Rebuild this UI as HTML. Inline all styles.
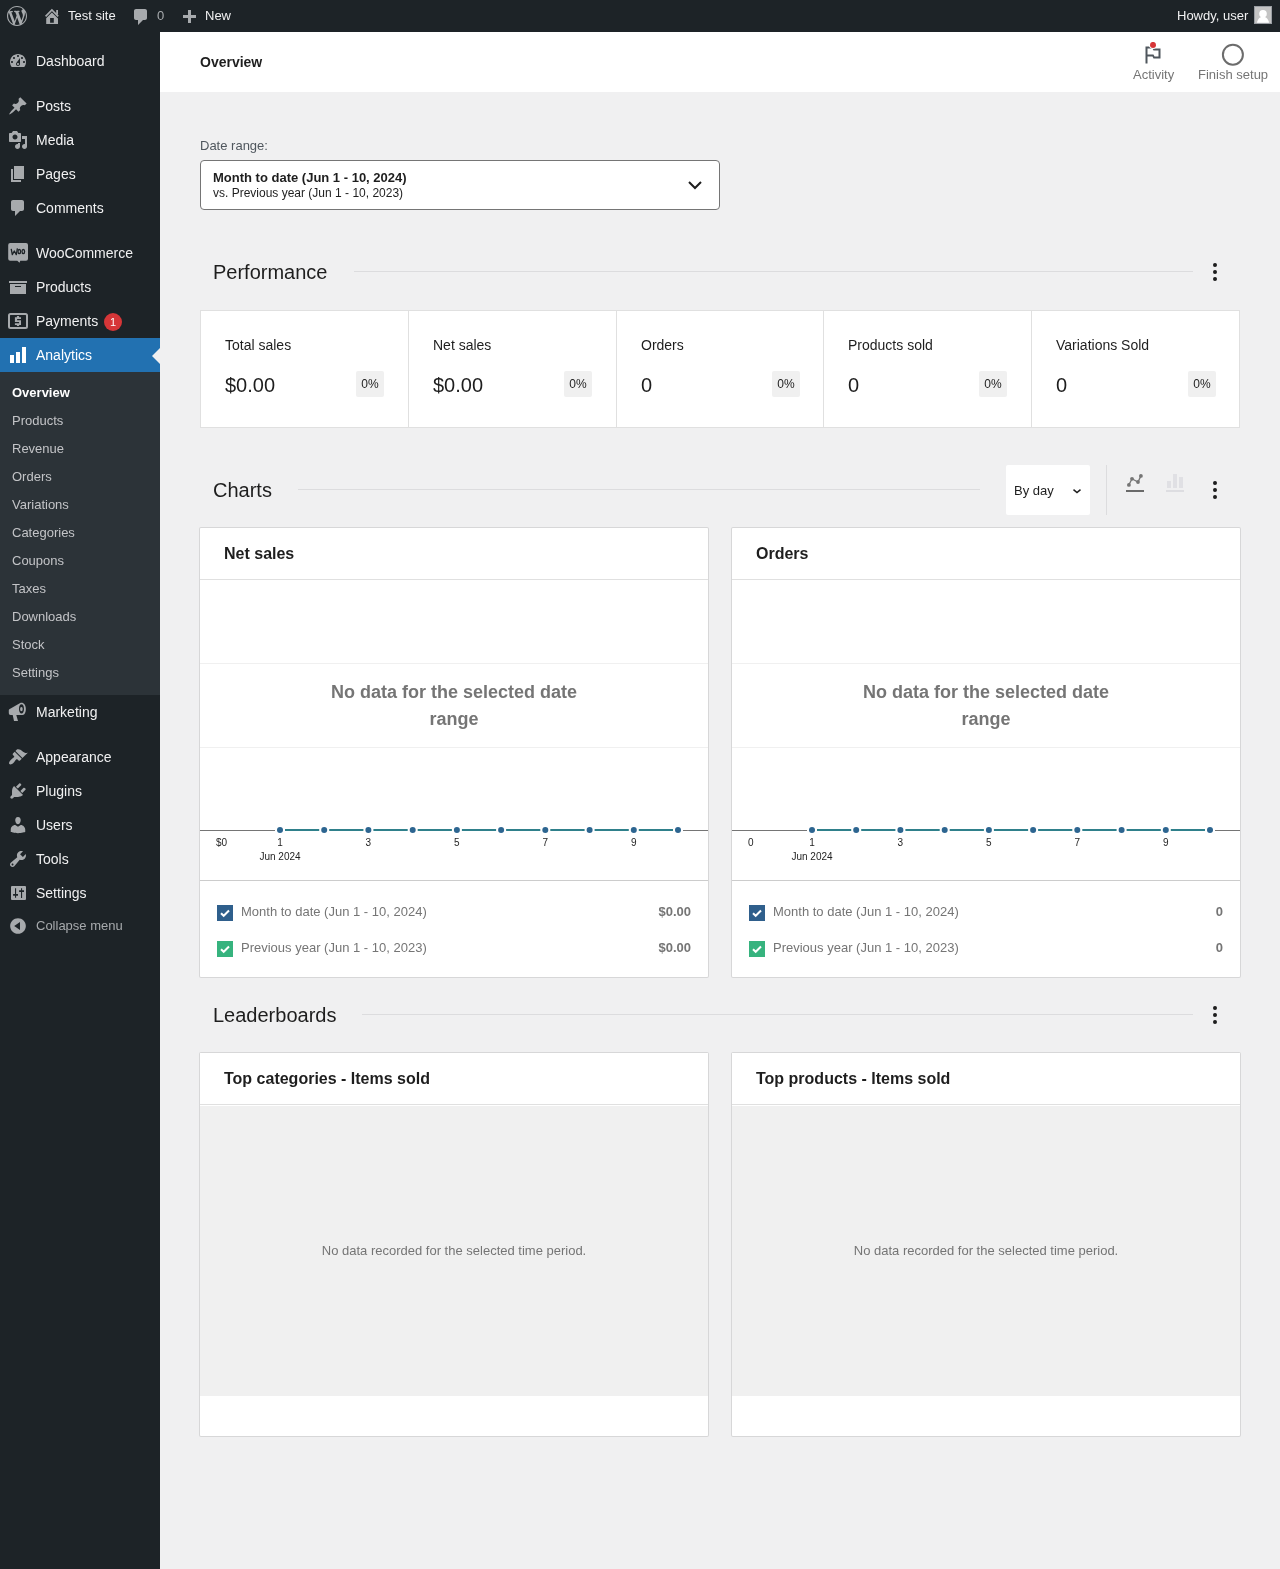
<!DOCTYPE html>
<html><head><meta charset="utf-8">
<style>
*{box-sizing:border-box;margin:0;padding:0}
html,body{width:1280px;height:1569px;overflow:hidden}
body>*{will-change:transform}
body{background:#f0f0f1;font-family:"Liberation Sans",sans-serif;color:#1e1e1e;position:relative}
.abs{position:absolute}
.t{position:absolute;white-space:nowrap}
#wpadminbar{position:absolute;left:0;top:0;width:1280px;height:32px;background:#1d2327;color:#f0f0f1;font-size:13px;line-height:32px}
#wpadminbar .t{top:0}
svg{position:absolute;display:block}
#adminmenuback{position:absolute;left:0;top:32px;width:160px;height:1537px;background:#1d2327}
.mi{position:absolute;left:0;width:160px;height:34px;color:#f0f0f1;font-size:14px;line-height:34px}
.mi .n{position:absolute;left:36px;top:0;white-space:nowrap}
.mi svg{left:8px;top:7px;width:20px;height:20px;fill:#a7aaad}
.mi.cur{background:#2271b1;color:#fff}
.mi.cur svg{fill:#fff}
.sub{position:absolute;left:0;top:372px;width:160px;height:323px;background:#2c3338}
.si{position:absolute;left:12px;font-size:13px;color:#c3c4c7;line-height:18px;white-space:nowrap}
.si.cur{color:#fff;font-weight:bold}
#hdr{position:absolute;left:160px;top:32px;width:1120px;height:60px;background:#fff}
.card{position:absolute;background:#fff;box-shadow:0 0 0 1px rgba(0,0,0,.1);border-radius:1px}
.sech{position:absolute;font-size:20px;line-height:24px;color:#1e1e1e;white-space:nowrap}
.secline{position:absolute;height:1px;background:#dcdcde}
.dots{position:absolute;width:4px;height:18px}
.dots i{position:absolute;left:0;width:3.800px;height:3.800px;border-radius:50%;background:#1e1e1e}
.sc{position:absolute;top:0;height:118px;border-right:1px solid #e0e0e0}
.sc .lbl{position:absolute;left:24px;top:25px;font-size:14px;line-height:18px;color:#1e1e1e;white-space:nowrap}
.sc .val{position:absolute;left:24px;top:62px;font-size:20px;line-height:24px;color:#1e1e1e;white-space:nowrap}
.sc .bdg{position:absolute;top:60px;width:28px;height:26px;background:#f0f0f0;border-radius:2px;font-size:12px;line-height:26px;text-align:center;color:#1e1e1e}
.ch .hd{position:absolute;left:0;top:0;width:508px;height:52px;border-bottom:1px solid #e0e0e0}
.ch .hd span{position:absolute;left:24px;top:16px;font-size:16px;line-height:20px;font-weight:bold;color:#1e1e1e;white-space:nowrap}
.grid{position:absolute;left:0;width:508px;height:1px;background:#f0f0f0}
.nodata{position:absolute;left:0;width:508px;top:151px;text-align:center;font-size:18px;line-height:27px;font-weight:bold;color:#757575}
.ax{position:absolute;font-size:10px;line-height:12px;color:#1e1e1e;white-space:nowrap;transform:translateX(-50%)}
.leg{position:absolute;left:0;width:508px;top:352px;height:97px;border-top:1px solid #ccc}
.cb{position:absolute;left:17px;width:16px;height:16px}
.lt{position:absolute;left:41px;font-size:13px;line-height:16px;color:#757575;white-space:nowrap}
.lv{position:absolute;right:17px;font-size:13px;line-height:16px;color:#757575;font-weight:bold;white-space:nowrap}
.lb .hd{position:absolute;left:0;top:0;width:508px;height:52px;border-bottom:1px solid #e0e0e0;background:#fff}
.lb .hd span{position:absolute;left:24px;top:16px;font-size:16px;line-height:20px;font-weight:bold;color:#1e1e1e;white-space:nowrap}
.lb .body{position:absolute;left:0;top:53px;width:508px;height:290px;background:#f0f0f0}
.lb .body span{position:absolute;left:0;width:508px;top:137px;text-align:center;font-size:13px;line-height:16px;color:#757575}
</style></head><body>
<div id="wpadminbar">
  <svg style="left:7px;top:6px" width="20" height="20" viewBox="0 0 20 20"><path fill="#a7aaad" d="M20 10c0-5.51-4.49-10-10-10C4.48 0 0 4.49 0 10c0 5.52 4.48 10 10 10 5.51 0 10-4.48 10-10zM7.78 15.37L4.37 6.22c.55-.02 1.170-.08 1.170-.08.5-.06.44-1.130-.06-1.110 0 0-1.450.11-2.370.11-.18 0-.37 0-.58-.01C4.120 2.690 6.870 1.110 10 1.110c2.330 0 4.450.87 6.050 2.340-.68-.11-1.650.39-1.650 1.580 0 .74.45 1.360.9 2.100.35.61.55 1.360.55 2.460 0 1.490-1.400 5-1.400 5l-3.030-8.370c.54-.02.82-.17.82-.17.5-.05.44-1.250-.06-1.220 0 0-1.440.12-2.380.12-.87 0-2.330-.12-2.330-.12-.5-.03-.56 1.200-.06 1.220l.92.08 1.260 3.410zM17.410 10c.24-.64.74-1.870.43-4.250.7 1.290 1.100 2.770 1.100 4.250 0 3.190-1.690 5.980-4.220 7.520.92-2.460 1.840-4.940 2.690-7.520zM6.100 18.090C3.120 16.640 1.110 13.530 1.110 10c0-1.300.23-2.480.72-3.590C3.250 10.300 4.670 14.200 6.100 18.090zm4.030-6.630l2.580 6.980c-.86.29-1.760.45-2.710.45-.79 0-1.570-.11-2.290-.33.81-2.380 1.610-4.740 2.420-7.100z"/></svg>
  <svg style="left:40px;top:4px" width="24" height="24" viewBox="40 4 24 24"><path d="M45.600 16.300L51.900 10l6.300 6.300" stroke="#a7aaad" stroke-width="1.700" fill="none"/><rect x="56.200" y="10" width="1.800" height="4.500" fill="#a7aaad"/><path fill-rule="evenodd" fill="#a7aaad" d="M46.200 18.200L51.900 12.500 58 18.600V24H46.200zM50.100 18v4.800h3.700V18z"/></svg>
  <span class="t" style="left:68px">Test site</span>
  <svg style="left:131px;top:7px" width="20" height="20" viewBox="0 0 20 20"><path fill="#a7aaad" d="M5 2h9c1.100 0 2 .9 2 2v7c0 1.100-.9 2-2 2h-2l-5 5v-5H5c-1.100 0-2-.9-2-2V4c0-1.100.9-2 2-2z"/></svg>
  <span class="t" style="left:157px;color:#a7aaad">0</span>
  <svg style="left:179px;top:8px" width="20" height="20" viewBox="0 0 20 20"><path fill="#a7aaad" d="M17 7v3h-5v5H9v-5H4V7h5V2h3v5h5z"/></svg>
  <span class="t" style="left:205px">New</span>
  <span class="t" style="left:1177px">Howdy, user</span>
  <div class="abs" style="left:1254px;top:6px;width:18px;height:18px;background:#c4c4c4;border:1px solid #9a9ea3;overflow:hidden"><svg style="left:0;top:0" width="16" height="16" viewBox="0 0 16 16"><circle cx="8" cy="6.700" r="3.800" fill="#fff"/><path d="M2 15.800C2.500 12.500 4.500 9.800 8 9.800s5.500 2.700 6 6z" fill="#fff"/></svg></div>
</div>
<div id="adminmenuback"></div>
<div class="mi" style="top:44px"><svg viewBox="0 0 20 20"><path d="M3.76 16h12.480c1.100-1.370 1.760-3.110 1.760-5 0-4.420-3.580-8-8-8s-8 3.580-8 8c0 1.890.66 3.630 1.760 5zM10 4c.55 0 1 .45 1 1s-.45 1-1 1-1-.45-1-1 .45-1 1-1zM6 6c.55 0 1 .45 1 1s-.45 1-1 1-1-.45-1-1 .45-1 1-1zm8 0c.55 0 1 .45 1 1s-.45 1-1 1-1-.45-1-1 .45-1 1-1zm-5.370 5.550L12 7v6c0 1.100-.9 2-2 2s-2-.9-2-2c0-.57.24-1.080.63-1.450zM4 10c.55 0 1 .45 1 1s-.45 1-1 1-1-.45-1-1 .45-1 1-1zm12 0c.55 0 1 .45 1 1s-.45 1-1 1-1-.45-1-1 .45-1 1-1zm-5 3c0-.55-.45-1-1-1s-1 .45-1 1 .45 1 1 1 1-.45 1-1z"/></svg><span class="n">Dashboard</span></div>
<div class="mi" style="top:89px"><svg viewBox="0 0 20 20"><path d="M10.440 3.020l1.820-1.820 6.360 6.350-1.830 1.820c-1.050-.68-2.480-.57-3.410.36l-.75.75c-.92.93-1.040 2.350-.35 3.410l-1.830 1.820-2.410-2.410-2.800 2.790c-.42.42-3.380 2.710-3.800 2.290s1.860-3.390 2.280-3.810l2.790-2.790L4.100 9.360l1.830-1.820c1.050.69 2.480.57 3.400-.36l.75-.75c.93-.92 1.050-2.350.36-3.410z"/></svg><span class="n">Posts</span></div>
<div class="mi" style="top:123px"><svg viewBox="0 0 20 20"><path d="M13 11V4c0-.55-.45-1-1-1h-1.670L9 1H5L3.670 3H2c-.55 0-1 .45-1 1v7c0 .55.45 1 1 1h10c.55 0 1-.45 1-1zM7 4.500c1.380 0 2.500 1.120 2.500 2.500S8.380 9.500 7 9.500 4.500 8.380 4.500 7 5.620 4.500 7 4.500zM14 6h5v10.500c0 1.380-1.120 2.500-2.500 2.500S14 17.880 14 16.500s1.120-2.500 2.500-2.500c.17 0 .34.02.5.05V9h-3V6zm-4 8.050V13h2v3.500c0 1.380-1.120 2.500-2.500 2.500S7 17.880 7 16.500 8.120 14 9.500 14c.17 0 .34.02.5.05z"/></svg><span class="n">Media</span></div>
<div class="mi" style="top:157px"><svg viewBox="0 0 20 20"><path d="M6 15V2h10v13H6zm-1 1h8v2H3V5h2v11z"/></svg><span class="n">Pages</span></div>
<div class="mi" style="top:191px"><svg viewBox="0 0 20 20"><path d="M5 2h9c1.100 0 2 .9 2 2v7c0 1.100-.9 2-2 2h-2l-5 5v-5H5c-1.100 0-2-.9-2-2V4c0-1.100.9-2 2-2z"/></svg><span class="n">Comments</span></div>
<div class="mi" style="top:236px"><svg style="left:4px;top:2px;width:28px;height:28px" viewBox="4 238 28 28"><path fill="#a7aaad" d="M10.200 243h15.800a2 2 0 0 1 2 2v13.800a2 2 0 0 1-2 2h-5.700l-.8 2-2.200-2h-7.100a2 2 0 0 1-2-2V245a2 2 0 0 1 2-2z"/><path d="M11.200 248.800l1.100 5.800 2-3.600 2 3.600 1.100-6.300" stroke="#1d2327" stroke-width="1.300" fill="none" stroke-linejoin="round"/><ellipse cx="19.300" cy="251.600" rx="1.300" ry="2.100" stroke="#1d2327" stroke-width="1.300" fill="none"/><ellipse cx="23.300" cy="251.600" rx="1.300" ry="2.100" stroke="#1d2327" stroke-width="1.300" fill="none"/></svg><span class="n">WooCommerce</span></div>
<div class="mi" style="top:270px"><svg viewBox="0 0 20 20"><path d="M19 4v2H1V4h18zM2 7h16v10H2V7zm11 3V9H7v1h6z"/></svg><span class="n">Products</span></div>
<div class="mi" style="top:304px"><svg style="left:4px;top:2px;width:28px;height:28px" viewBox="4 306 28 28"><rect x="9" y="314" width="18" height="14" rx="1.500" stroke="#a7aaad" stroke-width="2" fill="none"/><path fill="#a7aaad" d="M16.900 316h2.200v1.200H21v1.900h-3.900v1.100H21v4.700h-1.900v1.100h-2.200v-1.100H14.900v-1.600h4.200v-1.300H14.900v-4.800h2z"/></svg><span class="n">Payments</span><span class="abs" style="left:104px;top:9px;width:18px;height:18px;border-radius:9px;background:#d63638;color:#fff;font-size:11px;line-height:18px;text-align:center">1</span></div>
<div class="mi cur" style="top:338px"><svg viewBox="0 0 20 20"><path d="M18 18V2h-4v16h4zm-6 0V7H8v11h4zm-6 0v-8H2v8h4z"/></svg><span class="n">Analytics</span><div class="abs" style="right:0;top:10px;width:0;height:0;border:8px solid transparent;border-right-color:#f0f0f1"></div></div>
<div class="sub">
  <span class="si cur" style="top:12px">Overview</span>
  <span class="si" style="top:40px">Products</span>
  <span class="si" style="top:68px">Revenue</span>
  <span class="si" style="top:96px">Orders</span>
  <span class="si" style="top:124px">Variations</span>
  <span class="si" style="top:152px">Categories</span>
  <span class="si" style="top:180px">Coupons</span>
  <span class="si" style="top:208px">Taxes</span>
  <span class="si" style="top:236px">Downloads</span>
  <span class="si" style="top:264px">Stock</span>
  <span class="si" style="top:292px">Settings</span>
</div>
<div class="mi" style="top:695px"><svg style="left:4px;top:3px;width:28px;height:28px" viewBox="4 698 28 28"><path fill="#a7aaad" fill-rule="evenodd" d="M9.300 709.200L19.800 703.200C21.500 702.500 23.300 702.600 24.600 704.500 26.300 707.300 26.400 711.600 24.300 714.200 23.700 714.800 23.300 715 22.500 715H16.300L18 721H14L12.700 715H10.600C9.400 715 8.800 714.200 8.800 712.800V710.300C8.800 709.800 9 709.400 9.300 709.200zM21.500 704.300C20 704.300 19 706.400 19 708.900S20 713.500 21.500 713.500 24 711.400 24 708.900 23 704.300 21.500 704.300z"/><ellipse cx="21.400" cy="709.100" rx="1.300" ry="2.200" fill="#a7aaad"/></svg><span class="n">Marketing</span></div>
<div class="mi" style="top:740px"><svg viewBox="0 0 20 20"><path d="M14.480 11.060L7.410 3.990l1.500-1.500c.5-.56 2.300-.47 3.510.32 1.210.8 1.430 1.280 2.910 2.100 1.180.64 2.450 1.260 4.450.85zm-.71.71L6.700 4.700 4.930 6.470c-.39.39-.39 1.020 0 1.410l1.060 1.060c.39.39.39 1.030 0 1.420-.6.6-1.430 1.110-2.210 1.690-.35.26-.7.53-1.010.84C1.430 14.230.4 16.080 1.400 17.070c.99 1 2.840-.03 4.180-1.360.31-.31.58-.66.85-1.020.57-.78 1.080-1.610 1.690-2.210.39-.39 1.020-.39 1.410 0l1.060 1.060c.39.39 1.020.39 1.410 0z"/></svg><span class="n">Appearance</span></div>
<div class="mi" style="top:774px"><svg viewBox="0 0 20 20"><path d="M13.110 4.360L9.870 7.600 8 5.730l3.240-3.240c.35-.34 1.050-.2 1.560.32.52.51.66 1.210.31 1.550zm-8 1.770l.91-1.120 9.010 9.010-1.190.84c-.71.71-2.630 1.160-3.820 1.160H6.140L4.900 17.260c-.59.59-1.540.59-2.120 0-.59-.58-.59-1.530 0-2.120l1.240-1.240v-3.880c0-1.130.4-3.190 1.090-3.890zm7.260 3.970l3.240-3.240c.34-.35 1.040-.21 1.550.31.52.51.66 1.210.31 1.550l-3.240 3.250z"/></svg><span class="n">Plugins</span></div>
<div class="mi" style="top:808px"><svg viewBox="0 0 20 20"><path d="M10 9.250c-2.270 0-2.730-3.440-2.730-3.440C7 4.020 7.820 2 9.970 2c2.160 0 2.980 2.020 2.710 3.810 0 0-.41 3.440-2.680 3.440zm0 2.570L12.720 10c2.390 0 4.520 2.330 4.520 4.530v2.490s-3.650 1.130-7.240 1.130c-3.650 0-7.240-1.130-7.240-1.130v-2.490c0-2.250 1.940-4.480 4.470-4.480z"/></svg><span class="n">Users</span></div>
<div class="mi" style="top:842px"><svg viewBox="0 0 20 20"><path d="M16.680 9.770c-1.340 1.340-3.300 1.670-4.950.99l-5.410 6.520c-.99.99-2.590.99-3.580 0s-.99-2.590 0-3.570l6.520-5.420c-.68-1.650-.35-3.610.99-4.950 1.280-1.280 3.120-1.620 4.720-1.060l-2.890 2.890 2.820 2.820 2.860-2.870c.53 1.580.18 3.390-1.080 4.650zM3.810 16.210c.4.39 1.040.39 1.430 0 .4-.4.4-1.040 0-1.430-.39-.4-1.030-.4-1.430 0-.39.39-.39 1.030 0 1.430z"/></svg><span class="n">Tools</span></div>
<div class="mi" style="top:876px"><svg style="left:4px;top:3px;width:28px;height:28px" viewBox="4 879 28 28"><path fill="#a7aaad" fill-rule="evenodd" d="M12 885.900h13a1 1 0 0 1 1 1V899a1 1 0 0 1-1 1H12a1 1 0 0 1-1-1v-12.100a1 1 0 0 1 1-1zM15 888.200v5.900h-1.900v1.700H15v2h1.100v-2H18v-1.700h-1.900v-5.900zM21 888.200v2h-1.900v1.700H21v6h1.100v-6H24v-1.700h-1.900v-2z"/></svg><span class="n">Settings</span></div>
<div class="mi" style="top:911px;height:30px;line-height:30px;color:#a7aaad;font-size:13px"><svg style="top:5px" viewBox="0 0 20 20"><path d="M10 2.160c4.330 0 7.840 3.510 7.840 7.840s-3.510 7.840-7.840 7.840S2.160 14.330 2.160 10 5.710 2.160 10 2.160zm2 11.720V6.120L6.180 9.970z"/></svg><span class="n">Collapse menu</span></div>

<div id="hdr">
  <span class="t" style="left:40px;top:21px;font-size:14px;line-height:18px;font-weight:bold;color:#1e1e1e">Overview</span>
  <svg style="left:980px;top:10px" width="26" height="26" viewBox="0 0 26 26"><path transform="translate(0.500 0.400)" fill="#4f565d" d="M14 6l-1-2H5v17h2v-7h5l1 2h7V6h-6zm4 8h-4l-1-2H7V6h5l1 2h5v6z"/><circle cx="13" cy="2.900" r="4.200" fill="#fff"/><circle cx="13" cy="2.900" r="3" fill="#d63638"/></svg>
  <span class="t" style="left:973px;top:35px;font-size:13px;line-height:16px;color:#757575">Activity</span>
  <svg style="left:1061px;top:11px" width="24" height="24" viewBox="0 0 24 24"><circle cx="11.900" cy="11.700" r="10" stroke="#6c6c6c" stroke-width="2" fill="none"/></svg>
  <span class="t" style="left:1038px;top:35px;font-size:13px;line-height:16px;color:#757575">Finish setup</span>
</div>

<span class="t" style="left:200px;top:138px;font-size:13px;line-height:16px;color:#50575e">Date range:</span>
<div class="abs" style="left:200px;top:160px;width:520px;height:50px;background:#fff;border:1px solid #757575;border-radius:4px">
  <span class="t" style="left:12px;top:9px;font-size:13px;line-height:16px;font-weight:bold;color:#1e1e1e">Month to date (Jun 1 - 10, 2024)</span>
  <span class="t" style="left:12px;top:24px;font-size:12px;line-height:16px;color:#1e1e1e">vs. Previous year (Jun 1 - 10, 2023)</span>
  <svg style="left:487px;top:20px" width="14" height="9" viewBox="0 0 14 9"><path d="M1 1l6 6 6-6" stroke="#1e1e1e" stroke-width="2" fill="none"/></svg>
</div>

<span class="sech" style="left:213px;top:260px">Performance</span>
<div class="secline" style="left:354px;top:271px;width:839px"></div>
<div class="dots" style="left:1213.100px;top:263.100px"><i style="top:0"></i><i style="top:7px"></i><i style="top:14px"></i></div>

<div class="card" style="left:200px;top:310px;width:1040px;height:118px;border-radius:0;box-shadow:none;border:1px solid #e0e0e0;overflow:hidden">
  <div class="sc" style="left:0;width:208px"><span class="lbl">Total sales</span><span class="val">$0.00</span><span class="bdg" style="left:155px">0%</span></div>
  <div class="sc" style="left:208px;width:208px"><span class="lbl">Net sales</span><span class="val">$0.00</span><span class="bdg" style="left:155px">0%</span></div>
  <div class="sc" style="left:416px;width:207px"><span class="lbl">Orders</span><span class="val">0</span><span class="bdg" style="left:155px">0%</span></div>
  <div class="sc" style="left:623px;width:208px"><span class="lbl">Products sold</span><span class="val">0</span><span class="bdg" style="left:155px">0%</span></div>
  <div class="sc" style="left:831px;width:209px;border-right:0"><span class="lbl">Variations Sold</span><span class="val">0</span><span class="bdg" style="left:156px">0%</span></div>
</div>

<span class="sech" style="left:213px;top:478px">Charts</span>
<div class="secline" style="left:298px;top:489px;width:682px"></div>
<div class="abs" style="left:1006px;top:465px;width:84px;height:50px;background:#fff;border-radius:2px">
  <span class="t" style="left:8px;top:18px;font-size:13px;line-height:16px;color:#1e1e1e">By day</span>
  <svg style="left:0;top:0" width="84" height="50" viewBox="0 0 84 50"><path d="M67.500 24.600L71 27.500 74.500 24.600" stroke="#1e1e1e" stroke-width="1.500" fill="none"/></svg>
</div>
<div class="abs" style="left:1106px;top:465px;width:1px;height:50px;background:#dcdcde"></div>
<svg style="left:1120px;top:468px" width="30" height="30" viewBox="1120 468 30 30"><path d="M1128.900 484.900L1132 478.800 1138 482 1140.900 475.900" stroke="#757575" stroke-width="1.300" fill="none"/><circle cx="1128.900" cy="484.900" r="1.900" fill="#757575"/><circle cx="1132" cy="478.800" r="1.900" fill="#757575"/><circle cx="1138" cy="482" r="1.900" fill="#757575"/><circle cx="1140.900" cy="475.900" r="1.900" fill="#757575"/><rect x="1126" y="490" width="18" height="2" fill="#6a6a6a"/></svg>
<svg style="left:1160px;top:468px" width="30" height="30" viewBox="1160 468 30 30"><rect x="1167" y="481" width="4" height="7" fill="#e0e0e4"/><rect x="1173" y="474" width="4" height="14" fill="#e0e0e4"/><rect x="1179" y="477" width="4" height="11" fill="#e0e0e4"/><rect x="1166" y="490" width="18" height="2" fill="#dddde1"/></svg>
<div class="dots" style="left:1213.100px;top:481px"><i style="top:0"></i><i style="top:7px"></i><i style="top:14px"></i></div>

<div class="card ch" style="left:200px;top:528px;width:508px;height:449px" id="c1"><!--c1s--><div class="hd"><span>Net sales</span></div>
<div class="grid" style="top:135px"></div><div class="grid" style="top:219px"></div>
<div class="nodata">No data for the selected date<br>range</div>
<svg style="left:0;top:0" width="508" height="352" viewBox="0 0 508 352"><path d="M0 302.5H75.0M483.0 302.5H508" stroke="#757575" stroke-width="1"/><path d="M85.0 302H119.2" stroke="#2f808b" stroke-width="2"/><path d="M129.2 302H163.4" stroke="#2f808b" stroke-width="2"/><path d="M173.4 302H207.7" stroke="#2f808b" stroke-width="2"/><path d="M217.7 302H251.9" stroke="#2f808b" stroke-width="2"/><path d="M261.9 302H296.1" stroke="#2f808b" stroke-width="2"/><path d="M306.1 302H340.3" stroke="#2f808b" stroke-width="2"/><path d="M350.3 302H384.6" stroke="#2f808b" stroke-width="2"/><path d="M394.6 302H428.8" stroke="#2f808b" stroke-width="2"/><path d="M438.8 302H473.0" stroke="#2f808b" stroke-width="2"/><circle cx="80.0" cy="302" r="3" fill="#2d6590"/><circle cx="124.2" cy="302" r="3" fill="#2d6590"/><circle cx="168.4" cy="302" r="3" fill="#2d6590"/><circle cx="212.7" cy="302" r="3" fill="#2d6590"/><circle cx="256.9" cy="302" r="3" fill="#2d6590"/><circle cx="301.1" cy="302" r="3" fill="#2d6590"/><circle cx="345.3" cy="302" r="3" fill="#2d6590"/><circle cx="389.6" cy="302" r="3" fill="#2d6590"/><circle cx="433.8" cy="302" r="3" fill="#2d6590"/><circle cx="478.0" cy="302" r="3" fill="#2d6590"/></svg><span class="ax" style="left:16px;top:309px;transform:none">$0</span><span class="ax" style="left:80.0px;top:309px">1</span><span class="ax" style="left:168.4px;top:309px">3</span><span class="ax" style="left:256.9px;top:309px">5</span><span class="ax" style="left:345.3px;top:309px">7</span><span class="ax" style="left:433.8px;top:309px">9</span><span class="ax" style="left:80.0px;top:323px">Jun 2024</span>
<div class="leg">
<svg class="cb" style="top:24px" viewBox="0 0 16 16"><rect width="16" height="16" fill="#2f5f8c"/><path d="M4 8.200l2.700 2.600L12 5.500" stroke="#fff" stroke-width="2" fill="none"/></svg>
<span class="lt" style="top:23px">Month to date (Jun 1 - 10, 2024)</span><span class="lv" style="top:23px">$0.00</span>
<svg class="cb" style="top:60px" viewBox="0 0 16 16"><rect width="16" height="16" fill="#36b37e"/><path d="M4 8.200l2.700 2.600L12 5.500" stroke="#fff" stroke-width="2" fill="none"/></svg>
<span class="lt" style="top:59px">Previous year (Jun 1 - 10, 2023)</span><span class="lv" style="top:59px">$0.00</span>
</div><!--c1e--></div>
<div class="card ch" style="left:732px;top:528px;width:508px;height:449px" id="c2"><!--c2s--><div class="hd"><span>Orders</span></div>
<div class="grid" style="top:135px"></div><div class="grid" style="top:219px"></div>
<div class="nodata">No data for the selected date<br>range</div>
<svg style="left:0;top:0" width="508" height="352" viewBox="0 0 508 352"><path d="M0 302.5H75.0M483.0 302.5H508" stroke="#757575" stroke-width="1"/><path d="M85.0 302H119.2" stroke="#2f808b" stroke-width="2"/><path d="M129.2 302H163.4" stroke="#2f808b" stroke-width="2"/><path d="M173.4 302H207.7" stroke="#2f808b" stroke-width="2"/><path d="M217.7 302H251.9" stroke="#2f808b" stroke-width="2"/><path d="M261.9 302H296.1" stroke="#2f808b" stroke-width="2"/><path d="M306.1 302H340.3" stroke="#2f808b" stroke-width="2"/><path d="M350.3 302H384.6" stroke="#2f808b" stroke-width="2"/><path d="M394.6 302H428.8" stroke="#2f808b" stroke-width="2"/><path d="M438.8 302H473.0" stroke="#2f808b" stroke-width="2"/><circle cx="80.0" cy="302" r="3" fill="#2d6590"/><circle cx="124.2" cy="302" r="3" fill="#2d6590"/><circle cx="168.4" cy="302" r="3" fill="#2d6590"/><circle cx="212.7" cy="302" r="3" fill="#2d6590"/><circle cx="256.9" cy="302" r="3" fill="#2d6590"/><circle cx="301.1" cy="302" r="3" fill="#2d6590"/><circle cx="345.3" cy="302" r="3" fill="#2d6590"/><circle cx="389.6" cy="302" r="3" fill="#2d6590"/><circle cx="433.8" cy="302" r="3" fill="#2d6590"/><circle cx="478.0" cy="302" r="3" fill="#2d6590"/></svg><span class="ax" style="left:16px;top:309px;transform:none">0</span><span class="ax" style="left:80.0px;top:309px">1</span><span class="ax" style="left:168.4px;top:309px">3</span><span class="ax" style="left:256.9px;top:309px">5</span><span class="ax" style="left:345.3px;top:309px">7</span><span class="ax" style="left:433.8px;top:309px">9</span><span class="ax" style="left:80.0px;top:323px">Jun 2024</span>
<div class="leg">
<svg class="cb" style="top:24px" viewBox="0 0 16 16"><rect width="16" height="16" fill="#2f5f8c"/><path d="M4 8.200l2.700 2.600L12 5.500" stroke="#fff" stroke-width="2" fill="none"/></svg>
<span class="lt" style="top:23px">Month to date (Jun 1 - 10, 2024)</span><span class="lv" style="top:23px">0</span>
<svg class="cb" style="top:60px" viewBox="0 0 16 16"><rect width="16" height="16" fill="#36b37e"/><path d="M4 8.200l2.700 2.600L12 5.500" stroke="#fff" stroke-width="2" fill="none"/></svg>
<span class="lt" style="top:59px">Previous year (Jun 1 - 10, 2023)</span><span class="lv" style="top:59px">0</span>
</div><!--c2e--></div>

<span class="sech" style="left:213px;top:1003px">Leaderboards</span>
<div class="secline" style="left:362px;top:1014px;width:831px"></div>
<div class="dots" style="left:1213.100px;top:1006px"><i style="top:0"></i><i style="top:7px"></i><i style="top:14px"></i></div>

<div class="card lb" style="left:200px;top:1053px;width:508px;height:383px"><div class="hd"><span>Top categories - Items sold</span></div><div class="body"><span>No data recorded for the selected time period.</span></div></div>
<div class="card lb" style="left:732px;top:1053px;width:508px;height:383px"><div class="hd"><span>Top products - Items sold</span></div><div class="body"><span>No data recorded for the selected time period.</span></div></div>
</body></html>
